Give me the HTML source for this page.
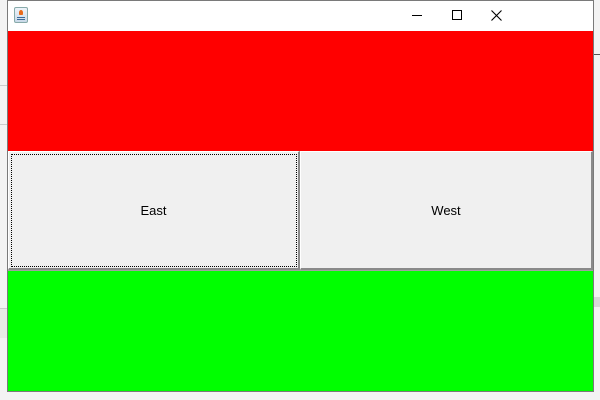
<!DOCTYPE html>
<html><head><style>
*{margin:0;padding:0;box-sizing:border-box}
body{width:600px;height:400px;background:#f3f3f3;position:relative;overflow:hidden;font-family:"Liberation Sans",sans-serif}
.win{position:absolute;left:7px;top:0;width:587px;height:392px;border:1px solid #7a7a7a;background:#f0f0f0}
.title{position:absolute;left:0;top:0;width:585px;height:30px;background:#fff}
.red{position:absolute;left:0;top:30px;width:585px;height:120px;background:#f00}
.green{position:absolute;left:0;top:269px;width:585px;height:121px;background:#0f0;border-top:1px solid #a0a0a0}
.btn{position:absolute;top:150px;height:119px;background:#f0f0f0;border-top:1px solid #fff;border-left:1px solid #fff;border-right:2px solid #8a8a8a;border-bottom:2px solid #8a8a8a;font-size:13px;color:#000;display:flex;align-items:center;justify-content:center}
.focus{position:absolute;left:2px;top:2px;right:1px;bottom:1px;border:1px dotted #000}
</style></head><body>
<div style="position:absolute;left:0;top:85px;width:7px;height:40px;border-top:1px solid #ccc;border-bottom:1px solid #ccc"></div>
<div style="position:absolute;left:594px;top:40px;width:6px;height:15px;border-bottom:1px solid #555"></div>
<div style="position:absolute;left:0;top:308px;width:7px;height:30px;background:#e8ebe6;border-top:1px solid #ccc"></div>
<div style="position:absolute;left:594px;top:297px;width:6px;height:10px;background:#d8d8d8"></div>
<div class="win">
 <div class="title">
  <div style="position:absolute;left:6px;top:6px;width:14px;height:16px;border:1px solid #8aa;border-radius:2px;background:linear-gradient(#eef4fa,#c9d9e8)">
   <div style="position:absolute;left:4px;top:2px;width:4px;height:5px;background:#e86a1a;border-radius:50% 50% 20% 20%"></div>
   <div style="position:absolute;left:2px;top:9px;width:8px;height:1px;background:#3a6a9a"></div>
   <div style="position:absolute;left:2px;top:11px;width:8px;height:1px;background:#3a6a9a"></div>
  </div>
  <div style="position:absolute;left:404px;top:14px;width:10px;height:1px;background:#000"></div>
  <div style="position:absolute;left:444px;top:9px;width:10px;height:10px;border:1px solid #000"></div>
  <svg style="position:absolute;left:483px;top:9px" width="11" height="11"><path d="M0.5 0.5L10.5 10.5M10.5 0.5L0.5 10.5" stroke="#000" stroke-width="1.1"/></svg>
 </div>
 <div class="red"></div>
 <div class="btn" style="left:0;width:292px"><div class="focus"></div>East</div>
 <div class="btn" style="left:292px;width:293px">West</div>
 <div class="green"></div>
</div>
</body></html>
